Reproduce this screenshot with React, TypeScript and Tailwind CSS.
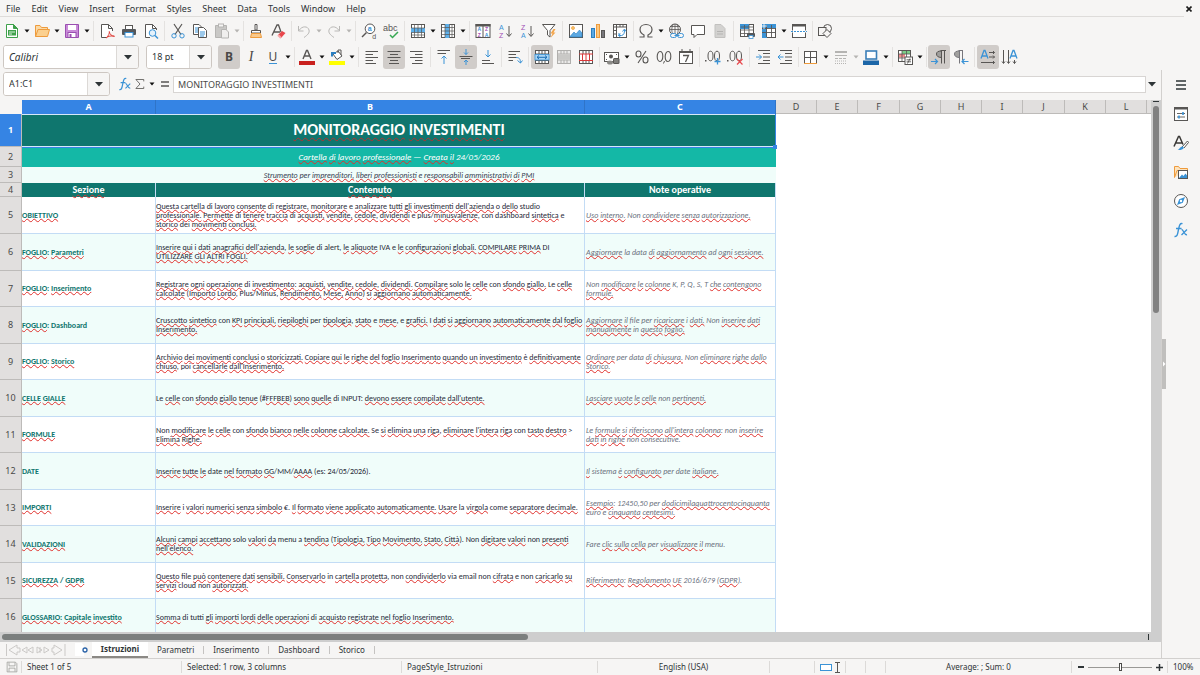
import React from "react";

const D = "#585654";
const B = "#3b93d6";

type IconDef = { [name: string]: React.ReactNode };

const gridLines = "M1 5.5H15M1 9.5H15M5.5 2V14M10.5 2V14";

const icons: IconDef = {
  newDoc: (
    <>
      <path d="M2.5 1.5H9.5L13.5 5.5V14.5H2.5Z" fill="#fff" stroke="#3fa14b" />
      <path d="M9.5 1.5V5.5H13.5Z" fill="#3fa14b" stroke="#3fa14b" />
      <rect x="4" y="7" width="8" height="5.5" fill="#3fa14b" />
      <path d="M5 9H11M5 11H8" stroke="#d7f2da" />
    </>
  ),
  open: (
    <>
      <path d="M1.5 13.5V2.5H6L7.500 4.500H13.500V6.500" fill="#fbd9a4" stroke="#ee9b3c" />
      <path d="M1.500 13.500L4 6.500H15.500L13.500 13.500Z" fill="#fbd08f" stroke="#ee9b3c" />
    </>
  ),
  save: (
    <>
      <path d="M1.500 1.500H14.500V14.500H1.500Z" fill="#c98ad8" stroke="#9a4fb0" />
      <rect x="4" y="2" width="8" height="5" fill="#fff" />
      <rect x="4" y="9.500" width="8" height="5" fill="#fff" stroke="#9a4fb0" />
      <rect x="5.500" y="11" width="2" height="3" fill="#9a4fb0" />
    </>
  ),
  pdf: (
    <>
      <path d="M7 14.500H2.500V1.500H9.500L13.500 5.500V8" fill="#fff" stroke={D} />
      <path d="M9.500 1.500V5.500H13.500" fill="none" stroke={D} />
      <path d="M7 15C10 12.500 10.500 10 10.300 8.500C10.800 11.500 12.500 13 15.500 13.300C12 12.500 9.500 13 7 15Z" fill="none" stroke="#e0403a" />
    </>
  ),
  print: (
    <>
      <rect x="4.500" y="2.500" width="7" height="4" fill="#fff" stroke={D} />
      <rect x="1" y="6" width="14" height="6" rx="1" fill="#55575a" />
      <rect x="4" y="9.500" width="8" height="4.500" fill="#fff" stroke={B} />
    </>
  ),
  preview: (
    <>
      <path d="M7 14.500H2.500V1.500H9.500L13.500 5.500V7" fill="#fff" stroke={D} />
      <path d="M9.500 1.500V5.500H13.500" fill="none" stroke={D} />
      <circle cx="9.500" cy="10" r="3.300" fill="#e5f2fc" stroke={B} />
      <path d="M12 12.500L15 15.500" stroke={B} strokeWidth="1.500" />
    </>
  ),
  cut: (
    <>
      <path d="M4 1L11 11.500M12 1L5 11.500" stroke={D} strokeWidth="1.200" />
      <circle cx="4" cy="12.800" r="2.200" fill="none" stroke={B} />
      <circle cx="12" cy="12.800" r="2.200" fill="none" stroke={B} />
    </>
  ),
  copy: (
    <>
      <path d="M1.500 1.500H7L9.500 4V11.500H1.500Z" fill="#fff" stroke={D} />
      <path d="M3 5H7M3 7H7M3 9H6" stroke={B} />
      <path d="M6.500 4.500H11.500L14.500 7.500V14.500H6.500Z" fill="#fff" stroke={D} />
      <path d="M8 9H13M8 11H13M8 13H12" stroke={B} />
    </>
  ),
  paste: (
    <>
      <path d="M1.500 2.500H12.500V14.500H1.500Z" fill="#c9c8c6" stroke="#b5b4b2" />
      <rect x="4.500" y="1" width="5" height="3" fill="#f6f5f4" stroke="#b5b4b2" />
      <path d="M7.500 6.500H12L14.500 9V15H7.500Z" fill="#f0efee" stroke="#b5b4b2" />
    </>
  ),
  clone: (
    <>
      <path d="M7 1.500H9V7H7Z" fill="#fff" stroke={D} />
      <path d="M3.500 7.500H12.500V10H3.500Z" fill="#fff" stroke={D} />
      <path d="M3.500 10.500H12.500L13.500 14.500H2.500Z" fill="#f9c98c" stroke="#ee9b3c" />
    </>
  ),
  clear: (
    <>
      <path d="M2 12.500L7 2H8.500L11 9M4 9H10" fill="none" stroke={D} strokeWidth="1.300" />
      <path d="M8 12L12 8L15.500 10L11 15Z" fill="#e8474c" />
      <path d="M8 12L11 15" stroke="#f7a7a9" strokeWidth="2" />
    </>
  ),
  undo: <path d="M2.500 3V8H7.500M3 7.500C6 2.500 12 3 13 7C13.800 10 11.500 12 8 14.500" fill="none" stroke="#b9b8b6" />,
  redo: <path d="M13.500 3V8H8.500M13 7.500C10 2.500 4 3 3 7C2.200 10 4.500 12 8 14.500" fill="none" stroke="#b9b8b6" />,
  find: (
    <>
      <circle cx="9" cy="5.800" r="4.800" fill="#fff" stroke={D} />
      <path d="M5.500 9.500L1 14" stroke={D} strokeWidth="1.500" />
      <text x="6.800" y="8" fontSize="7" fontWeight="700" fill={B}>a</text>
      <text x="11.200" y="15.500" fontSize="7" fill={D}>d</text>
    </>
  ),
  spell: (
    <>
      <text x="0" y="8" fontSize="9" fill={D}>abc</text>
      <path d="M7 12L9.500 14.500L15 9" fill="none" stroke="#36a852" strokeWidth="1.500" />
    </>
  ),
  row: (
    <>
      <rect x="1.500" y="1.500" width="13" height="13" fill="#fff" stroke={D} />
      <rect x="1" y="5" width="14" height="4.500" fill="#5fb0ea" />
      <path d="M1.500 5H14.500M1.500 9.500H14.500M1.500 12H14.500M4.500 2V14M8 2V14M11.500 2V14" stroke={D} strokeWidth=".7" />
    </>
  ),
  col: (
    <>
      <rect x="1.500" y="1.500" width="13" height="13" fill="#fff" stroke={D} />
      <rect x="5" y="1" width="4.500" height="14" fill="#5fb0ea" />
      <path d="M5 1.500V14.500M9.500 1.500V14.500M12 1.500V14.500M2 4.500H14M2 8H14M2 11.500H14" stroke={D} strokeWidth=".7" />
    </>
  ),
  sort: (
    <>
      <rect x="1" y="1.500" width="14" height="13" fill="#fff" stroke={D} />
      <rect x=".5" y="1" width="15" height="2.500" fill={D} />
      <path d="M8 3V14" stroke={D} />
      <text x="2.500" y="8" fontSize="5" fontWeight="700" fill={B}>A</text>
      <text x="2.800" y="13.800" fontSize="5" fontWeight="700" fill="#a04bb5">Z</text>
      <text x="10" y="8" fontSize="5" fontWeight="700" fill="#a04bb5">Z</text>
      <text x="9.800" y="13.800" fontSize="5" fontWeight="700" fill={B}>A</text>
    </>
  ),
  az: (
    <>
      <text x="2" y="6.500" fontSize="7" fill={B}>A</text>
      <text x="2" y="15" fontSize="7" fill="#a04bb5">Z</text>
      <path d="M12 3V13M9.500 10.500L12 13.500L14.500 10.500" fill="none" stroke={D} />
    </>
  ),
  za: (
    <>
      <text x="2" y="6.500" fontSize="7" fill="#a04bb5">Z</text>
      <text x="2" y="15" fontSize="7" fill={B}>A</text>
      <path d="M12 3V13M9.500 10.500L12 13.500L14.500 10.500" fill="none" stroke={D} />
    </>
  ),
  filter: (
    <>
      <path d="M1.500 1.500H14L9 7.500V14L6.500 12V7.500Z" fill="#fff" stroke={D} />
      <path d="M12.500 6L9.500 10.500H11.500L9.500 15L14.500 9.500H12.500L14.500 6Z" fill="#f3a54b" />
    </>
  ),
  image: (
    <>
      <rect x="1.500" y="1.500" width="13" height="13" fill="#fff" stroke={D} />
      <circle cx="5" cy="5" r="1.500" fill="#f6c76a" stroke="#ee9b3c" strokeWidth=".7" />
      <path d="M2 13.500L6 9L8 11L11.500 7L14 10V14H2Z" fill="#5ba8e2" stroke="#2a7fc2" strokeWidth=".6" />
    </>
  ),
  chart: (
    <>
      <rect x="1.500" y="5.500" width="3" height="9" fill="#5ba8e2" stroke="#2a7fc2" />
      <rect x="6.500" y="1.500" width="3" height="13" fill="#fbc77f" stroke="#ee9b3c" />
      <rect x="11.500" y="7.500" width="3" height="7" fill="#77767b" stroke={D} />
    </>
  ),
  pivot: (
    <>
      <rect x="1.500" y="1.500" width="13" height="13" fill="#fff" stroke={D} />
      <path d="M1.500 4H14.500M4.500 1.500V14.500M8 2V4M11 2V4M2 7.500H4M2 11H4" stroke={D} />
      <path d="M7 10V12.500H9.500C12 12 12.500 10 12.500 7M10.500 8.500L12.500 6L14 8.500M8.500 10.800L6.500 12.500L8.500 14" fill="none" stroke={B} />
    </>
  ),
  omega: <path d="M1.500 14H6V12C3 10.500 2 8.500 2 6.500C2 3.500 4.500 1.500 8 1.500S14 3.500 14 6.500C14 8.500 13 10.500 10 12V14H14.500" fill="none" stroke={D} strokeWidth="1.200" />,
  link: (
    <>
      <circle cx="7" cy="6.500" r="5.500" fill="none" stroke={D} />
      <path d="M1.500 6.500H12.500M7 1V12M2.500 3.500H11.500M4.500 11C3.500 7.500 3.500 4.500 5 1.500M9.500 11C10.500 7.500 10.500 4.500 9 1.500" fill="none" stroke={D} strokeWidth=".8" />
      <rect x="2.500" y="10.500" width="6" height="4" rx="2" fill="#f6f5f4" stroke={B} />
      <rect x="9.500" y="10.500" width="6" height="4" rx="2" fill="#f6f5f4" stroke={B} />
      <path d="M6.500 12.500H11.500" stroke={B} />
    </>
  ),
  comment: <path d="M1.500 2.500H14.500V11.500H7L4 14.500V11.500H1.500Z" fill="#fff" stroke={D} />,
  docGrey: (
    <>
      <path d="M3 1.500H9L13 5.500V14.500H3Z" fill="#d3d2d0" stroke="#c2c1bf" />
      <path d="M5 8.500H11M5 11H11" stroke="#b5b4b2" />
    </>
  ),
  headFoot: (
    <>
      <rect x="1.500" y="1.500" width="13" height="12" fill="#fff" stroke={D} />
      <rect x="1" y="1" width="9" height="5" fill="#3b93d6" />
      <path d="M1.500 4H14.500M1.500 7H14.500M1.500 10.500H14.500M5.500 2V13M10 2V13" stroke={D} strokeWidth=".8" />
      <rect x="8" y="10" width="8" height="4" rx="1" fill="#55575a" />
      <rect x="10" y="12.500" width="4" height="3" fill="#fff" stroke={B} strokeWidth=".8" />
    </>
  ),
  freeze: (
    <>
      <rect x="1.500" y="1.500" width="13" height="13" fill="#fff" stroke={D} />
      <rect x="1" y="1" width="5" height="14" fill="#3b93d6" />
      <rect x="1" y="1" width="14" height="4" fill="#3b93d6" />
      <path d={gridLines} stroke={D} strokeWidth=".9" />
      <path d="M3 0V6M0 3H6" stroke="#fff" strokeWidth=".8" />
    </>
  ),
  split: (
    <>
      <rect x="1.500" y="1.500" width="13" height="13" fill="#fff" stroke={D} />
      <rect x="1" y="1" width="14" height="2.500" fill={D} />
      <path d="M0 8.500H16" stroke="#fff" strokeWidth="2" />
      <path d="M0 8.500H16" stroke={B} strokeDasharray="2 1" />
    </>
  ),
  shapes: (
    <>
      <circle cx="10.500" cy="5.500" r="4" fill="none" stroke={D} />
      <rect x="1.500" y="4.500" width="7.500" height="8" fill="#f6f5f4" stroke={D} />
      <path d="M10 6.500L14 10.500L10 14.500L6 10.500Z" fill="#f6f5f4" stroke={D} />
    </>
  ),
  fontColor: (
    <>
      <path d="M4 10L7.500 1.500H8.500L12 10M5.300 7H10.700" fill="none" stroke={D} strokeWidth="1.400" />
      <rect x="0" y="12" width="16" height="4" fill="#c9211e" />
    </>
  ),
  highlight: (
    <>
      <path d="M4 5L9 2L13 7L8 10.500Z" fill="#fff" stroke={D} />
      <path d="M9 4V1H12V6" fill="none" stroke={D} />
      <path d="M3 7.500V4H7" fill="none" stroke="#2a7fc2" strokeWidth="2" />
      <rect x="0" y="12" width="16" height="4" fill="#ffff00" />
    </>
  ),
  left: <path d="M1.500 2.500H14M1.500 5.500H9M1.500 8.500H14M1.500 11.500H9M1.500 14.500H12" stroke={D} />,
  center: <path d="M1.500 2.500H14.500M4 5.500H12M1.500 8.500H14.500M4 11.500H12M3 14.500H13" stroke={D} />,
  right: <path d="M2 2.500H14.500M7 5.500H14.500M2 8.500H14.500M7 11.500H14.500M4 14.500H14.500" stroke={D} />,
  vtop: (
    <>
      <path d="M1.500 1.500H14M1.500 4.500H10" stroke={D} />
      <path d="M8 15V7M5.500 9.500L8 7L10.500 9.500" fill="none" stroke={B} />
    </>
  ),
  vmid: (
    <>
      <path d="M1.500 7.500H14.500M3 9.500H12" stroke={D} />
      <path d="M8 0V5.500M6 3.500L8 5.500L10 3.500M8 16V11M6 13L8 11L10 13" fill="none" stroke={B} />
    </>
  ),
  vbot: (
    <>
      <path d="M2 11.500H10M2 14.500H14" stroke={D} />
      <path d="M8 1V8M5.500 5.500L8 8L10.500 5.500" fill="none" stroke={B} />
    </>
  ),
  wrap: (
    <>
      <path d="M1.500 2.500H13M1.500 5.500H9M1.500 8.500H9M1.500 11.500H6" stroke={D} />
      <path d="M9 8.500C12.500 8.500 13.500 10 13.500 14M10.500 11.500L13.500 14L15.500 11.500" fill="none" stroke={B} />
    </>
  ),
  merge: (
    <>
      <rect x="1.500" y="1.500" width="13" height="13" fill="#fff" stroke={D} />
      <path d="M1.500 5H14.500M1.500 11.500H14.500M5 2V5M8 2V5M11 2V5M5 12V14M8 12V14M11 12V14" stroke={D} />
      <rect x="1" y="5.500" width="14" height="5.500" fill="#a9d5f5" stroke={B} strokeWidth=".8" />
      <path d="M3 8.300H13M5 6.500L3 8.300L5 10M11 6.500L13 8.300L11 10" fill="none" stroke="#1a6db3" />
    </>
  ),
  mergeGrey: (
    <>
      <rect x="1.500" y="1.500" width="13" height="13" fill="#ebeae9" stroke="#b0afad" />
      <path d="M1.500 5H14.500M1.500 11H14.500M5 2V5M8 2V5M11 2V5M5 11V14M8 11V14M11 11V14" stroke="#b0afad" />
      <rect x="2" y="5.500" width="12" height="5" fill="#c9c8c6" />
    </>
  ),
  unmerge: (
    <>
      <rect x="1.500" y="1.500" width="13" height="13" fill="#fff" stroke={D} />
      <path d="M5 2V5M8 2V5M11 2V5M5 12V14M8 12V14M11 12V14" stroke={D} />
      <path d="M1 5H15M1 11.500H15M4.500 5V11M8 5V11M11.500 5V11" stroke="#d9383a" />
    </>
  ),
  currency: (
    <>
      <rect x=".5" y="3.500" width="14" height="9" fill="#fff" stroke={D} />
      <circle cx="7" cy="7.500" r="2" fill={D} />
      <path d="M2 5.500H3M12 5.500H13M2 10.500H3" stroke={D} />
      <ellipse cx="6" cy="13.500" rx="3" ry="2" fill="#8a8986" />
      <rect x="9" y="9" width="6.500" height="6" rx="1.500" fill={D} />
      <path d="M10 11H14.500M10 13H14.500" stroke="#c9c8c6" strokeWidth=".7" />
    </>
  ),
  percent: (
    <>
      <ellipse cx="4.500" cy="5" rx="2.500" ry="3" fill="none" stroke={D} strokeWidth="1.100" />
      <ellipse cx="11.500" cy="11" rx="2.500" ry="3" fill="none" stroke={D} strokeWidth="1.100" />
      <path d="M12 2L4 14" stroke={D} strokeWidth="1.100" />
    </>
  ),
  number: (
    <>
      <ellipse cx="4" cy="7.500" rx="2.800" ry="5" fill="none" stroke={D} strokeWidth="1.100" />
      <ellipse cx="12" cy="7.500" rx="2.800" ry="5" fill="none" stroke={D} strokeWidth="1.100" />
      <path d="M8.500 12L7.500 14.500" stroke={D} />
    </>
  ),
  date: (
    <>
      <rect x="1.500" y="2.500" width="13" height="12" fill="#fff" stroke={D} />
      <rect x="1" y="2" width="14" height="2" fill={D} />
      <path d="M4 0V3M12 0V3" stroke={D} />
      <path d="M5 6.500H10.500L7.500 13" fill="none" stroke={D} strokeWidth="1.300" />
    </>
  ),
  decAdd: (
    <>
      <ellipse cx="5.500" cy="7" rx="2.500" ry="4.800" fill="none" stroke={D} />
      <ellipse cx="12" cy="7" rx="2.500" ry="4.800" fill="none" stroke={D} />
      <rect x="0" y="11" width="1.500" height="1.500" fill={D} />
      <path d="M12.500 9V15.500M9.500 12.500H15.500" stroke={B} strokeWidth="1.300" />
    </>
  ),
  decDel: (
    <>
      <ellipse cx="5.500" cy="7" rx="2.500" ry="4.800" fill="none" stroke={D} />
      <ellipse cx="12" cy="7" rx="2.500" ry="4.800" fill="none" stroke={D} />
      <rect x="0" y="11" width="1.500" height="1.500" fill={D} />
      <path d="M10 10L15.500 15.500M15.500 10L10 15.500" stroke="#e8474c" strokeWidth="1.200" />
    </>
  ),
  indent: (
    <>
      <path d="M3 1.500H15M8 4.500H15M8 8H15M8 11.500H15M3 14.500H15" stroke={D} />
      <path d="M1 8H6.500M4 5.500L6.500 8L4 10.500" fill="none" stroke={B} />
    </>
  ),
  outdent: (
    <>
      <path d="M3 1.500H15M8 4.500H15M8 8H15M8 11.500H15M3 14.500H15" stroke={D} />
      <path d="M1 8H6.500M3.500 5.500L1 8L3.500 10.500" fill="none" stroke={B} />
    </>
  ),
  borders: (
    <>
      <rect x="1.500" y="2.500" width="12" height="12" fill="#fff" stroke={D} />
      <path d="M7.500 2.500V14.500M1.500 8.500H13.500" stroke={D} />
      <path d="M1 14.500H14" stroke="#ee9b3c" />
    </>
  ),
  lineStyle: (
    <>
      <path d="M2 3H14" stroke="#b5b4b2" strokeWidth="2" />
      <path d="M2 6.500H14" stroke="#b5b4b2" />
      <path d="M2 9.500H14" stroke="#b5b4b2" strokeDasharray="3 1" />
      <path d="M2 12H14M2 14.500H14" stroke="#b5b4b2" strokeDasharray="1 1" />
    </>
  ),
  lineColor: (
    <>
      <rect x="3" y="2" width="10.500" height="8" fill="#fff" stroke="#3b7fb8" strokeWidth="1.600" />
      <rect x="0" y="11.500" width="16" height="4.500" fill="#1c66a8" />
    </>
  ),
  conditional: (
    <>
      <rect x="1.500" y="1.500" width="12" height="11" fill="#fff" stroke={D} />
      <rect x="5" y="2" width="8" height="3" fill="#7ccf88" />
      <rect x="2" y="5" width="6" height="3.500" fill="#f08a8c" />
      <path d="M1.500 5H13.500M1.500 9H13.500M5 2V12M9.500 2V12" stroke={D} strokeWidth=".8" />
      <rect x="8" y="8" width="7.500" height="7.500" fill="#fff" stroke={D} />
      <path d="M9.500 10.800H14M9.500 12.800H14M13 9.500L10.500 14.500" stroke={D} strokeWidth=".9" />
    </>
  ),
  ltr: (
    <>
      <path d="M10.500 2C7 2 5.500 3 5.500 5S7 8.500 10.500 8.500" fill="#a09f9d" stroke={D} />
      <path d="M9.500 1.500H15M10.500 2V14.500M13.500 2V14.500" stroke={D} />
      <path d="M0 12.500H6M4 10L6.500 12.500L4 15" fill="none" stroke={B} strokeWidth="1.200" />
    </>
  ),
  rtl: (
    <>
      <path d="M6.500 2C3 2 1.500 3 1.500 5S3 8.500 6.500 8.500" fill="#a09f9d" stroke="#77767b" />
      <path d="M5.500 1.500H10M6.500 2V14.500M9.500 2V11" stroke="#77767b" />
      <path d="M9 12.500H15.500M11.500 10L9 12.500L11.500 15" fill="none" stroke={B} strokeWidth="1.200" />
    </>
  ),
  textH: (
    <>
      <path d="M1 9.500L4 1.500H5L8 9.500M2.200 7H6.800" fill="none" stroke={B} strokeWidth="1.300" />
      <path d="M9 3.500H14.500M13 2L14.500 3.500L13 5M9 8H14.500M13 6.500L14.500 8L13 9.500M1 13.500H14.500M13 12L14.500 13.500L13 15" fill="none" stroke={D} />
    </>
  ),
  textV: (
    <>
      <path d="M8 9.500L11 1.500H12L15 9.500M9.200 7H13.800" fill="none" stroke={B} strokeWidth="1.300" />
      <path d="M1.500 1V14M0 12.500L1.500 14.500L3 12.500M6.500 1V14M5 12.500L6.500 14.500L8 12.500M12.500 11V14.500M11 12.500L12.500 14.500L14 12.500" fill="none" stroke={D} />
    </>
  ),
  menu: <path d="M3 4H13M3 8H13M3 12H13" stroke="#2e3436" strokeWidth="1.500" />,
  props: (
    <>
      <rect x="1.500" y="1.500" width="13" height="13" fill="#fff" stroke={D} />
      <rect x="1" y="1" width="14" height="2.500" fill={D} />
      <path d="M4 7.500H12M4 11H12" stroke={D} strokeWidth=".9" />
      <path d="M10 6V9M6 9.500V12.500" stroke={B} strokeWidth="1.600" />
    </>
  ),
  styles: (
    <>
      <path d="M1 11.500L5.500 1.500H6.500L10 9.500M2.500 8H9" fill="none" stroke="#3a3836" strokeWidth="1.500" />
      <path d="M9 12L14.500 6L15.500 7.500L11 13" fill="#fff" stroke={D} />
      <path d="M4.500 15C6.500 14.500 7 11.500 9.500 11.500C12 12 11 15.500 4.500 15Z" fill={B} />
    </>
  ),
  gallery: (
    <>
      <path d="M1.500 13.500V2.500H5.500L7 4.500H14.500V6" fill="#fde3bd" stroke="#ee9b3c" />
      <path d="M1.500 13.500L4 6.500H5" fill="none" stroke="#ee9b3c" />
      <rect x="5.500" y="6.500" width="9" height="8" fill="#fff" stroke={D} />
      <path d="M6 14L9 10.500L10.500 12L12.500 9.500L14 11.500V14Z" fill={B} />
    </>
  ),
  navigator: (
    <>
      <circle cx="8" cy="8" r="6.500" fill="#fff" stroke={D} />
      <path d="M12 4L9.800 9.800L4 12L6.200 6.200Z" fill={B} />
      <circle cx="8" cy="8" r="1.200" fill="#fff" />
    </>
  ),
  fx: (
    <>
      <path d="M1.500 14.500C4.500 15 4.500 12 5.500 7.500S7 1 9.500 1.700M3 6.500H8.500" fill="none" stroke={B} strokeWidth="1.400" />
      <path d="M8.500 7.500C10.500 7 11 13.500 14 12.700M14 7.500L8.500 13" fill="none" stroke={B} strokeWidth="1.300" />
    </>
  ),
  sum: <path d="M13 4.500V2H2.500L8 8L2.500 14H13V11.500" fill="none" stroke={D} strokeWidth="1.100" />,
  saveGrey: (
    <>
      <path d="M1.500 1.500H12.500L14.500 3.500V14.500H1.500Z" fill="none" stroke="#9a9996" />
      <path d="M4 2V6.500H12V2M4 14V9.500H12V14" fill="none" stroke="#9a9996" />
    </>
  ),
};

function Icon({ name, className = "size-4" }: { name: string; className?: string }) {
  return (
    <svg viewBox="0 0 16 16" className={`${className} shrink-0 overflow-visible font-['Liberation_Sans',sans-serif]`} aria-hidden="true">
      {icons[name]}
    </svg>
  );
}

function Tool({ name, label, active, children }: { name?: string; label: string; active?: boolean; children?: React.ReactNode }) {
  return (
    <button
      type="button"
      aria-label={label}
      aria-pressed={active}
      className={`flex h-6 w-[22px] shrink-0 items-center justify-center rounded-[3px] ${active ? "bg-[#d0ccc9]" : ""}`}
    >
      {name ? <Icon name={name} /> : children}
    </button>
  );
}

function Caret({ label, grey }: { label: string; grey?: boolean }) {
  return (
    <button type="button" aria-label={label} className="flex h-6 w-2 shrink-0 items-center justify-center">
      <svg viewBox="0 0 6 4" className="h-1 w-1.5" aria-hidden="true">
        <path d="M.5 .5H5.500L3 3.500Z" fill={grey ? "#b5b4b2" : "#111"} />
      </svg>
    </button>
  );
}

function BigCaret() {
  return (
    <svg viewBox="0 0 8 5" className="h-[5px] w-2" aria-hidden="true">
      <path d="M0 0H8L4 4.500Z" fill="#2e3436" />
    </svg>
  );
}

const sepWidths = { s: "w-1", m: "w-[5px]", l: "w-1.5" };

function Sep({ w = "m" }: { w?: "s" | "m" | "l" }) {
  return (
    <span className={`flex h-5 shrink-0 justify-center ${sepWidths[w]}`}>
      <span className="w-px bg-[#e4e2e0]" />
    </span>
  );
}

/* Toolbar strings: "name" = button, "name!" = pressed, "v" / "v-" = menu arrow, "|s" "|m" "|l" = divider */
const standardBar =
  "newDoc v open v save v |m pdf print preview |m cut copy paste v- |s clone clear |s undo v- redo v- |m find spell |m row v col v |m sort az za filter |m image chart pivot |s omega v link comment docGrey |m headFoot freeze v split |s shapes";
const formatBar =
  "|s fontColor v highlight v |m left center! right |l vtop vmid! vbot |m wrap |m merge! mergeGrey unmerge |s currency v percent number date |m decAdd decDel |l indent outdent |s borders v lineStyle v- lineColor v |s conditional v |s ltr! rtl |m textH! textV";

function Bar({ items }: { items: string }) {
  return (
    <>
      {items.split(" ").map((t, i) => {
        if (t === "v" || t === "v-") return <Caret key={i} grey={t === "v-"} label="More options" />;
        if (t[0] === "|") return <Sep key={i} w={t[1] as "s" | "m" | "l"} />;
        const name = t.replace("!", "");
        return <Tool key={i} name={name} label={name} active={t.endsWith("!") || undefined} />;
      })}
    </>
  );
}

function Combo({ label, value, className, inputClass = "text-[9px]" }: { label: string; value: string; className: string; inputClass?: string }) {
  return (
    <div className={`flex shrink-0 overflow-hidden rounded-[3px] border border-[#cdc7c2] bg-white ${className}`}>
      <input aria-label={label} defaultValue={value} className={`min-w-0 flex-1 bg-white pl-[5px] text-[#2e3436] outline-none ${inputClass}`} />
      <button type="button" aria-label={`${label} list`} className="flex w-[22px] items-center justify-center border-l border-[#dcd9d6] bg-[#f6f5f4]">
        <BigCaret />
      </button>
    </div>
  );
}

/* Text inside [brackets] is underlined by the spell checker, word by word. */
function Checked({ text, offset = "underline-offset-0 decoration-[#e0302c]" }: { text: string; offset?: string }) {
  return (
    <>
      {text.split(/[[\]]/).map((part, i) =>
        i % 2
          ? part.split(" ").map((w, j) => (
              <React.Fragment key={`${i}-${j}`}>
                {j > 0 && " "}
                <span className={`underline decoration-wavy decoration-1 [text-decoration-skip-ink:none] ${offset}`}>{w}</span>
              </React.Fragment>
            ))
          : part,
      )}
    </>
  );
}

type Row = { n: number; h: string; a: string; b: string[]; c: string[] };

const rows: Row[] = [
  { n: 5, h: "h-[37px]", a: "[OBIETTIVO]", b: ["[Questa cartella] di [lavoro consente] di [registrare, monitorare] e [analizzare tutti gli investimenti dell'azienda] o [dello] studio", "[professionale. Permette] di [tenere traccia] di [acquisti, vendite, cedole, dividendi] e plus/[minusvalenze], con dashboard [sintetica] e", "[storico] dei [movimenti conclusi.]"], c: ["[Uso interno.] Non [condividere senza autorizzazione.]"] },
  { n: 6, h: "h-[37px]", a: "[FOGLIO]: [Parametri]", b: ["[Inserire qui] i [dati anagrafici dell'azienda], [le soglie] di alert, [le aliquote] IVA e [le configurazioni globali. COMPILARE PRIMA] DI", "[UTILIZZARE GLI ALTRI FOGLI.]"], c: ["[Aggiornare] la data [di aggiornamento] ad [ogni sessione.]"] },
  { n: 7, h: "h-9", a: "[FOGLIO]: [Inserimento]", b: ["[Registrare ogni operazione] di [investimento]: [acquisti, vendite, cedole, dividendi. Compilare] solo [le celle] con [sfondo giallo.] Le [celle]", "[calcolate] ([Importo Lordo], Plus/Minus, [Rendimento, Mese, Anno]) [si aggiornano automaticamente.]"], c: ["Non [modificare le colonne] K, P, Q, S, T [che contengono]", "[formule.]"] },
  { n: 8, h: "h-[37px]", a: "[FOGLIO]: Dashboard", b: ["[Cruscotto sintetico] con [KPI principali, riepiloghi] per [tipologia], [stato] e [mese], e [grafici.] I [dati si aggiornano automaticamente dal foglio]", "[Inserimento.]"], c: ["[Aggiornare il] file per [ricaricare] i [dati.] Non [inserire dati]", "[manualmente] in [questo foglio.]"] },
  { n: 9, h: "h-9", a: "[FOGLIO]: [Storico]", b: ["[Archivio dei movimenti conclusi] o [storicizzati. Copiare qui le righe del foglio Inserimento quando un investimento] è [definitivamente]", "[chiuso], poi [cancellarle dall'Inserimento.]"], c: ["[Ordinare] per data [di chiusura.] Non [eliminare righe dallo]", "[Storico.]"] },
  { n: 10, h: "h-[37px]", a: "[CELLE GIALLE]", b: ["Le [celle] con [sfondo giallo tenue] (#[FFFBEB]) [sono quelle] di INPUT: [devono essere compilate dall'utente.]"], c: ["[Lasciare vuote le celle] non [pertinenti.]"] },
  { n: 11, h: "h-9", a: "[FORMULE]", b: ["Non [modificare le celle] con [sfondo bianco nelle colonne calcolate.] Se [si elimina una riga], [eliminare l'intera riga] con [tasto destro] >", "[Elimina Righe.]"], c: ["Le [formule si riferiscono all'intera colonna]: non [inserire]", "[dati in righe] non consecutive."] },
  { n: 12, h: "h-[37px]", a: "DATE", b: ["[Inserire tutte le] date [nel formato GG]/MM/[AAAA] (es: 24/05/2026)."], c: ["[Il] sistema [è configurato] per date [italiane.]"] },
  { n: 13, h: "h-9", a: "[IMPORTI]", b: ["[Inserire] i [valori numerici senza simbolo] €. [Il formato viene applicato automaticamente. Usare] la [virgola] come [separatore decimale.]"], c: ["[Esempio]: 12450,50 per [dodicimilaquattrocentocinquanta]", "euro e [cinquanta centesimi.]"] },
  { n: 14, h: "h-[37px]", a: "[VALIDAZIONI]", b: ["[Alcuni campi accettano] solo [valori da] menu a [tendina] ([Tipologia, Tipo Movimento, Stato, Città]). Non [digitare valori] non [presenti]", "[nell'elenco.]"], c: ["Fare [clic sulla cella] per [visualizzare il] menu."] },
  { n: 15, h: "h-9", a: "[SICUREZZA] / [GDPR]", b: ["[Questo] file [può contenere dati sensibili. Conservarlo] in [cartella protetta], non [condividerlo] via email non [cifrata] e non [caricarlo su]", "[servizi] cloud non [autorizzati.]"], c: ["[Riferimento]: [Regolamento UE] 2016/679 ([GDPR])."] },
  { n: 16, h: "h-[37px]", a: "[GLOSSARIO]: [Capitale investito]", b: ["[Somma] di tutti [gli importi lordi delle operazioni] di [acquisto registrate nel foglio Inserimento.]"], c: [] },
];

const letters = ["D", "E", "F", "G", "H", "I", "J", "K", "L"];
const colWidths = ["w-[22px]", "w-[134px]", "w-[429px]", "w-[191px]", "w-[41px]", "w-[41px]", "w-[42px]", "w-[41px]", "w-[41px]", "w-[41px]", "w-[42px]", "w-[41px]", "w-[41px]", ""];

function RowHead({ n, selected }: { n: number; selected?: boolean }) {
  return (
    <th
      scope="row"
      className={`border-r border-b border-[#bdbbb9] p-0 text-center font-['Noto_Sans',sans-serif] text-[9px] leading-[10px] ${selected ? "bg-[#3584e4] font-bold text-white" : "bg-[#e1dfde] font-normal text-[#4a4a48]"}`}
    >
      {n}
    </th>
  );
}

function Sheet() {
  const cell = "border-r border-b border-[#c3dcf5] p-0 text-left font-normal leading-[9px] whitespace-nowrap";
  const book = "font-[Carlito,Lato,sans-serif]";
  const onTeal = "underline-offset-2 decoration-[#b3322f]";
  return (
    <table className="w-full table-fixed border-separate border-spacing-0">
      <colgroup>
        {colWidths.map((w, i) => (
          <col key={i} className={w} />
        ))}
      </colgroup>
      <thead>
        <tr className="h-3.5 text-[9px] leading-[10px]">
          <td className="bg-[#f6f5f4] p-0" />
          {["A", "B", "C"].map((l) => (
            <th key={l} scope="col" className="border-r border-[#2f74c8] bg-[#3584e4] p-0 font-bold text-white">
              {l}
            </th>
          ))}
          {letters.map((l) => (
            <th key={l} scope="col" className="border-r border-b border-[#bdbbb9] bg-[#e1dfde] p-0 font-normal text-[#4a4a48]">
              {l}
            </th>
          ))}
          <th className="border-b border-[#bdbbb9] bg-[#e1dfde] p-0" />
        </tr>
      </thead>
      <tbody className={book}>
        <tr className="h-[33px]">
          <RowHead n={1} selected />
          <td colSpan={3} className="relative bg-[#0f766e] p-0 pb-0.5 text-center text-[16px] leading-5 font-bold text-white">
            <Checked text="[MONITORAGGIO INVESTIMENTI]" offset={onTeal} />
            <span className="absolute inset-0 border-t border-r border-b border-[#d6e8fb]" />
            <span className="absolute inset-x-0 -bottom-px h-px bg-[#3584e4]" />
            <span className="absolute inset-y-0 right-0 w-px bg-[#3584e4]" />
            <span className="absolute -right-px -bottom-0.5 size-1 bg-[#3584e4]" />
          </td>
          <td colSpan={10} />
        </tr>
        <tr className="h-5">
          <RowHead n={2} />
          <td colSpan={3} className="bg-[#14b8a6] p-0 text-center text-[9px] leading-[10px] text-white italic">
            <Checked text="[Cartella di lavoro professionale] — [Creata il] 24/05/2026" />
          </td>
          <td colSpan={10} />
        </tr>
        <tr className="h-4">
          <RowHead n={3} />
          <td colSpan={3} className="bg-[#f0fdfa] p-0 text-center text-[8px] leading-[9px] text-[#374151] italic">
            <Checked text="[Strumento] per [imprenditori, liberi professionisti] e [responsabili amministrativi di PMI]" />
          </td>
          <td colSpan={10} />
        </tr>
        <tr className="h-3.5 bg-[#0f766e] text-[10px] leading-[11px] text-white">
          <RowHead n={4} />
          {["[Sezione]", "[Contenuto]", "Note operative"].map((t) => (
            <td key={t} className="border-r border-[#c3dcf5] p-0 pb-0.5 text-center font-bold">
              <Checked text={t} offset="underline-offset-1 decoration-[#d8322f]" />
            </td>
          ))}
          <td colSpan={10} className="bg-white" />
        </tr>
        {rows.map((r) => (
          <tr key={r.n} className={`text-[8px] ${r.h} ${r.n % 2 ? "bg-white" : "bg-[#f0fdfa]"}`}>
            <RowHead n={r.n} />
            <td className={`${cell} text-[#0f766e]`}>
              <b>
                <Checked text={r.a} />
              </b>
            </td>
            <td className={`${cell} text-[#1f2937]`}>
              {r.b.map((l) => (
                <div key={l}>
                  <Checked text={l} />
                </div>
              ))}
            </td>
            <td className={`${cell} pl-px text-[#6b7280] italic`}>
              {r.c.map((l) => (
                <div key={l}>
                  <Checked text={l} />
                </div>
              ))}
            </td>
            <td colSpan={10} className="bg-white" />
          </tr>
        ))}
      </tbody>
    </table>
  );
}

const tabs = ["Istruzioni", "Parametri", "Inserimento", "Dashboard", "Storico"];
const statusCell = "flex h-3 shrink-0 items-center border-l border-[#dcdad8]";

export default function App() {
  return (
    <div className="flex h-screen w-full flex-col overflow-hidden bg-[#f6f5f4] font-['Noto_Sans',sans-serif] text-[#2e3436]">
      <nav className="flex h-4 shrink-0 items-center pt-px pl-1.5 text-[9px] leading-3">
        <div className="flex flex-1 gap-[11px]">
          {["File", "Edit", "View", "Insert", "Format", "Styles", "Sheet", "Data", "Tools", "Window", "Help"].map((m) => (
            <button key={m} type="button">
              {m}
            </button>
          ))}
        </div>
        <button type="button" aria-label="Close document" className="mr-2">
          <svg viewBox="0 0 6 6" className="size-1.5" aria-hidden="true">
            <path d="M.5 .5L5.500 5.500M5.500 .5L.5 5.500" stroke="#1c1c1c" strokeWidth="1.600" />
          </svg>
        </button>
      </nav>
      <div className="mr-4 h-px shrink-0 bg-[#dedcda]" />
      <div role="toolbar" aria-label="Standard" className="flex h-[27px] shrink-0 items-center pl-px">
        <Bar items={standardBar} />
      </div>
      <div role="toolbar" aria-label="Formatting" className="flex h-[26px] shrink-0 items-center pl-[3px]">
        <Combo label="Font name" value="Calibri" className="mr-[7px] h-6 w-[136px]" inputClass="italic text-[10px]" />
        <Combo label="Font size" value="18 pt" className="mr-1.5 h-6 w-[66px]" />
        <Tool label="Bold" active>
          <span className="text-[12px] leading-4 font-bold text-[#4a4846]">B</span>
        </Tool>
        <Tool label="Italic">
          <span className="font-['Liberation_Serif',serif] text-[14px] leading-4 text-[#4a4846] italic">I</span>
        </Tool>
        <Tool label="Underline">
          <span className="border-b border-[#3b93d6] text-[12px] leading-[13px] text-[#4a4846]">U</span>
        </Tool>
        <Caret label="Underline style" />
        <Bar items={formatBar} />
      </div>

      <div className="flex min-h-0 flex-1">
        <div className="flex min-w-0 flex-1 flex-col">
          <div className="flex h-[30px] shrink-0 items-center pb-0.5 pl-[3px]">
            <Combo label="Name box" value="A1:C1" className="mr-2 h-6 w-[107px]" />
            <button type="button" aria-label="Function wizard" className="flex w-3.5 justify-center">
              <Icon name="fx" className="size-3.5" />
            </button>
            <button type="button" aria-label="Select function" className="flex w-4 justify-center">
              <Icon name="sum" className="size-3" />
            </button>
            <Caret label="Functions" />
            <button type="button" aria-label="Formula" className="flex w-[17px] justify-center">
              <svg viewBox="0 0 8 6" className="h-1.5 w-2" aria-hidden="true">
                <path d="M0 1H8M0 5H8" stroke={D} strokeWidth="1.400" />
              </svg>
            </button>
            <input
              aria-label="Formula input"
              defaultValue="MONITORAGGIO INVESTIMENTI"
              className="h-[17px] min-w-0 flex-1 border border-[#d8d5d3] bg-white pl-1 text-[9px] text-[#4a4a48] outline-none"
            />
            <button type="button" aria-label="Expand formula bar" className="flex w-[15px] justify-center pr-1">
              <BigCaret />
            </button>
          </div>
          <div className="flex min-h-0 flex-1">
            <div className="min-w-0 flex-1 overflow-hidden bg-white">
              <Sheet />
            </div>
            <div className="flex w-2.5 shrink-0 flex-col items-center bg-[#cecece]">
              <div className="mt-px h-px w-1.5 bg-[#2e3436]" />
              <div className="mt-1 h-[39%] w-1.5 rounded-full bg-[#808080]" />
            </div>
          </div>
          <div className="flex h-2.5 shrink-0 items-center justify-between bg-[#cecece] pl-0.5">
            <div className="h-1.5 w-[45.4%] rounded-full bg-[#7b7f7e]" />
            <div className="mr-3 h-1.5 w-px bg-[#2e3436]" />
          </div>
          <div className="flex h-4 shrink-0 items-stretch text-[8px] leading-3">
            <div className="flex items-center pl-1.5">
              <svg viewBox="0 0 60 12" className="h-3 w-[60px]" fill="#f6f5f4" stroke="#cbc9c7" aria-hidden="true">
                <path d="M.5 0V12M11 1L3 6L11 11V8H14V4H11ZM21 3L16 6L21 9ZM27 3L22 6L27 9ZM34 3V9M31 3L36 6L31 9ZM38 3L43 6L38 9ZM48 1L56 6L48 11V8H46V4H48ZM59 0V12" />
              </svg>
            </div>
            <button type="button" aria-label="Add sheet" className="flex w-[26px] items-center justify-end pr-1">
              <svg viewBox="0 0 14 14" className="size-3.5" aria-hidden="true">
                <path d="M1 0H8L10 3V13H1Z" fill="#fff" />
                <circle cx="11" cy="7" r="2" fill="#fff" stroke="#2a62a8" strokeWidth="1.300" />
              </svg>
            </button>
            <div role="tablist" className="flex items-stretch">
              {tabs.map((t, i) =>
                i === 0 ? (
                  <button key={t} type="button" role="tab" aria-selected="true" className="w-14 border-b-2 border-[#8b8985] bg-white text-center font-bold">
                    {t}
                  </button>
                ) : (
                  <div key={t} className="flex items-center">
                    <button type="button" role="tab" aria-selected="false" className="h-4 px-[9px]">
                      {t}
                    </button>
                    <span className="h-2 w-px bg-[#c5c3c1]" />
                  </div>
                ),
              )}
            </div>
          </div>
        </div>

        <aside className="flex w-[39px] shrink-0 border-l border-[#d2d0ce]">
          <div className="flex w-1 items-center">
            <button type="button" aria-label="Hide sidebar" className="flex h-[50px] w-1 items-center justify-center bg-[#c0bfbd]">
              <svg viewBox="0 0 4 6" className="h-1.5 w-1" aria-hidden="true">
                <path d="M1 .5L3.500 3L1 5.500Z" fill="#fff" />
              </svg>
            </button>
          </div>
          <div className="flex flex-1 flex-col items-center gap-[13px] pt-[7px] pr-1">
            {["menu", "props", "styles", "gallery", "navigator", "fx"].map((n) => (
              <button key={n} type="button" aria-label={n}>
                <Icon name={n} />
              </button>
            ))}
          </div>
        </aside>
      </div>

      <footer className="flex h-[17px] shrink-0 items-center border-t border-[#d2d0ce] text-[8px] leading-3">
        <div className="flex w-[21px] shrink-0 justify-center pl-0.5">
          <Icon name="saveGrey" className="size-3" />
        </div>
        <div className={`${statusCell} w-40 pl-[5px]`}>Sheet 1 of 5</div>
        <div className={`${statusCell} w-[220px] pl-[5px]`}>Selected: 1 row, 3 columns</div>
        <div className={`${statusCell} w-[196px] pl-[5px]`}>PageStyle_Istruzioni</div>
        <div className={`${statusCell} min-w-0 flex-1 justify-center`}>English (USA)</div>
        <div className={`${statusCell} w-[45px]`} />
        <div className={`${statusCell} w-[31px] justify-center`}>
          <svg viewBox="0 0 20 11" className="h-[11px] w-5" aria-hidden="true">
            <rect x=".5" y="2.500" width="11" height="6" fill="#fff" stroke={B} />
            <path d="M15 .5H20M15 10.500H20M17.500 .5V10.500" stroke={D} />
          </svg>
        </div>
        <div className={`${statusCell} w-5`} />
        <div className={`${statusCell} w-5`} />
        <div className={`${statusCell} w-[186px] justify-center`}>Average: ; Sum: 0</div>
        <div className={`${statusCell} w-24 justify-between pr-1 pl-1.5`}>
          <button type="button" aria-label="Zoom out" className="h-0.5 w-1.5 bg-[#2e3436]" />
          <input
            type="range"
            aria-label="Zoom"
            defaultValue={50}
            className="h-2 w-16 appearance-none bg-[linear-gradient(#9a9996,#9a9996)] bg-[length:100%_1px] bg-center bg-no-repeat [&::-webkit-slider-thumb]:h-2 [&::-webkit-slider-thumb]:w-[3px] [&::-webkit-slider-thumb]:appearance-none [&::-webkit-slider-thumb]:border [&::-webkit-slider-thumb]:border-[#4a4a48] [&::-webkit-slider-thumb]:bg-white"
          />
          <button type="button" aria-label="Zoom in">
            <svg viewBox="0 0 7 7" className="size-[7px]" aria-hidden="true">
              <path d="M0 3.500H7M3.500 0V7" stroke="#2e3436" strokeWidth="1.500" />
            </svg>
          </button>
        </div>
        <div className={`${statusCell} w-[33px] pl-[5px]`}>100%</div>
      </footer>
    </div>
  );
}
